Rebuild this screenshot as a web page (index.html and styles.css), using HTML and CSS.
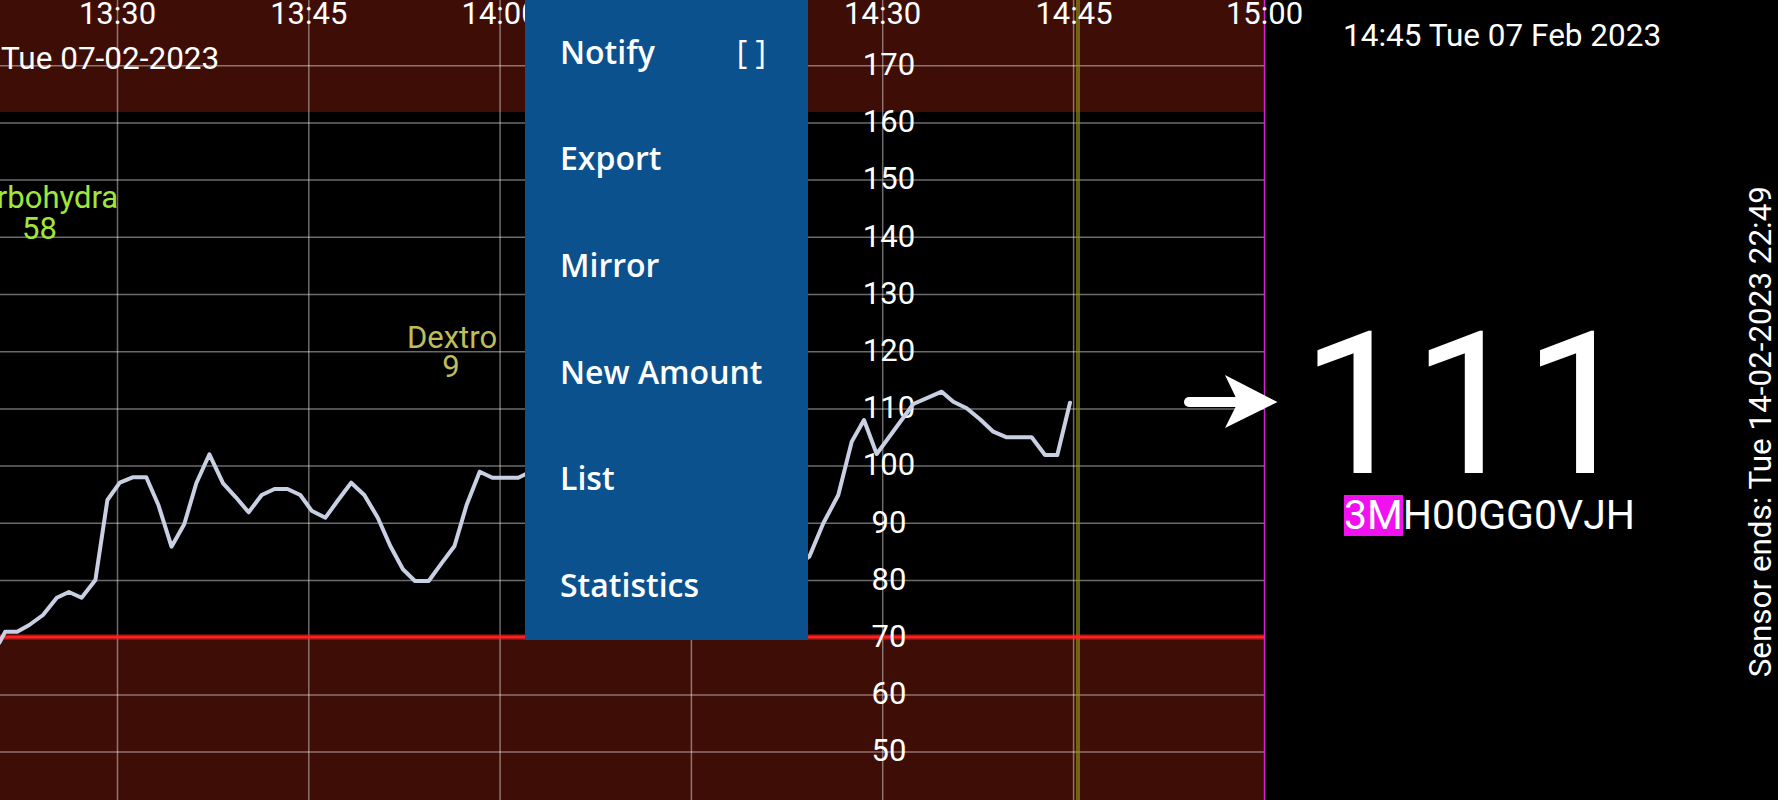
FILE: index.html
```html
<!DOCTYPE html>
<html lang="en">
<head>
<meta charset="utf-8">
<title>Glucose</title>
<link rel="stylesheet" href="styles.css">
</head>
<body>
<div class="screen">
  <svg class="chart" width="1265" height="800" viewBox="0 0 1265 800">
    <rect class="band" x="0" y="0" width="1265" height="112"/>
    <rect class="band" x="0" y="637.7" width="1265" height="163"/>
    <g class="grid">
      <line x1="0" y1="65.7" x2="1264" y2="65.7"/>
      <line x1="0" y1="122.9" x2="1264" y2="122.9"/>
      <line x1="0" y1="180.1" x2="1264" y2="180.1"/>
      <line x1="0" y1="237.3" x2="1264" y2="237.3"/>
      <line x1="0" y1="294.5" x2="1264" y2="294.5"/>
      <line x1="0" y1="351.7" x2="1264" y2="351.7"/>
      <line x1="0" y1="408.9" x2="1264" y2="408.9"/>
      <line x1="0" y1="466.1" x2="1264" y2="466.1"/>
      <line x1="0" y1="523.3" x2="1264" y2="523.3"/>
      <line x1="0" y1="580.5" x2="1264" y2="580.5"/>
      <line x1="0" y1="694.9" x2="1264" y2="694.9"/>
      <line x1="0" y1="752.1" x2="1264" y2="752.1"/>
      <line x1="117.5" y1="0" x2="117.5" y2="800"/>
      <line x1="308.8" y1="0" x2="308.8" y2="800"/>
      <line x1="500.1" y1="0" x2="500.1" y2="800"/>
      <line x1="691.4" y1="0" x2="691.4" y2="800"/>
      <line x1="882.7" y1="0" x2="882.7" y2="800"/>
      <line x1="1073.6" y1="0" x2="1073.6" y2="800"/>
    </g>
    <line class="now" x1="1078" y1="0" x2="1078" y2="800"/>
    <line class="low-glow" x1="0" y1="637" x2="1264" y2="637"/>
    <line class="low" x1="0" y1="637" x2="1264" y2="637"/>
    <line class="edge" x1="1264.5" y1="0" x2="1264.5" y2="800"/>
    <g class="axis">
      <text x="117.5" y="24">13:30</text>
      <text x="308.8" y="24">13:45</text>
      <text x="500.1" y="24">14:00</text>
      <text x="691.4" y="24">14:15</text>
      <text x="882.7" y="24">14:30</text>
      <text x="1074" y="24">14:45</text>
      <text x="1264.5" y="24">15:00</text>
      <text x="889" y="75">170</text>
      <text x="889" y="132">160</text>
      <text x="889" y="189">150</text>
      <text x="889" y="247">140</text>
      <text x="889" y="304">130</text>
      <text x="889" y="361">120</text>
      <text x="889" y="418">110</text>
      <text x="889" y="475">100</text>
      <text x="889" y="533">90</text>
      <text x="889" y="590">80</text>
      <text x="889" y="647">70</text>
      <text x="889" y="704">60</text>
      <text x="889" y="761">50</text>
    </g>
    <text class="day" x="1" y="69">Tue 07-02-2023</text>
    <g class="carb">
      <text x="39" y="208">Carbohydra</text>
      <text x="39.5" y="238.5">58</text>
    </g>
    <g class="dextro">
      <text x="452" y="348">Dextro</text>
      <text x="451" y="377">9</text>
    </g>
    <polyline class="curve" points="-8,652 0,641.7 5.2,631.7 17.2,631.7 29.3,625 43,615 56.8,597.7 68.9,592 81.6,597.7 95.4,580 107.4,500 119.8,482.7 132.6,477.3 146.3,477.3 158.4,505 171.5,546.7 184.2,524.3 196.3,483.3 209.4,454.3 223.1,483.3 235.9,497.3 248.6,512.3 261.7,495 274.5,489 287.5,489 300.3,495 311.6,510.7 325.4,517.7 338.2,500 351.2,482.7 364.3,495 377.8,517.7 390.2,545.7 402.9,569.3 415,581 428.7,581 441.5,563.3 454.5,546 466.6,505 479.7,471.7 492.4,477.7 518.3,477.7 530,472 560,480 600,500 650,560 700,600 760,590 796,566 809.3,556.7 823.3,523.3 838.3,495 851.7,441.7 864,420 876.7,454 913.3,404 941.7,391.7 953.3,401.7 966.7,408.3 980,419.3 993.3,431.7 1006.7,437.3 1031.7,437.3 1045,455 1057.3,455 1070,402.7"/>
    <line class="arrow-shaft" x1="1189" y1="402" x2="1240" y2="402"/>
    <polygon class="arrow-head" points="1225,375 1277.5,402 1225,428 1238,402"/>
  </svg>

  <div class="menu">
    <div class="menu-item"><span>Notify</span><span class="check">[ ]</span></div>
    <div class="menu-item"><span>Export</span></div>
    <div class="menu-item"><span>Mirror</span></div>
    <div class="menu-item"><span>New Amount</span></div>
    <div class="menu-item"><span>List</span></div>
    <div class="menu-item"><span>Statistics</span></div>
  </div>

  <div class="panel">
    <div class="readout">
      <div class="stamp">14:45 Tue 07 Feb 2023</div>
      <div class="value">111</div>
      <div class="serial"><span class="mark">3M</span>H00GG0VJH</div>
    </div>
    <div class="sensor">Sensor ends: Tue 14-02-2023 22:49</div>
  </div>
</div>
</body>
</html>
```
FILE: styles.css
```css
html, body {
  margin: 0;
  padding: 0;
  background: #000;
}
body {
  width: 1778px;
  height: 800px;
  overflow: hidden;
  font-family: Roboto, "Liberation Sans", sans-serif;
  color: #fff;
}
.screen {
  position: relative;
  display: flex;
  width: 1778px;
  height: 800px;
}
.chart {
  flex: none;
  display: block;
  overflow: visible;
}
.band { fill: #3e0e06; }
.grid line {
  stroke: rgba(255, 255, 255, 0.42);
  stroke-width: 1.5;
}
.now {
  stroke: rgba(150, 150, 20, 0.62);
  stroke-width: 4;
}
.low-glow {
  stroke: rgba(255, 40, 40, 0.35);
  stroke-width: 6;
}
.low {
  stroke: #ff2121;
  stroke-width: 3;
}
.edge {
  stroke: #d41fd4;
  stroke-width: 1.5;
}
.axis text, .day, .carb text, .dextro text {
  font-family: Roboto, sans-serif;
  font-size: 31px;
}
.axis text {
  fill: #fff;
  text-anchor: middle;
}
.day {
  fill: #fff;
  font-size: 31.5px;
}
.carb text {
  fill: #a2e63c;
  text-anchor: middle;
}
.dextro text {
  fill: #bdbd5a;
  text-anchor: middle;
}
.curve {
  fill: none;
  stroke: #c9d0e4;
  stroke-width: 4;
  stroke-linejoin: round;
  stroke-linecap: round;
}
.arrow-shaft {
  stroke: #fff;
  stroke-width: 10;
  stroke-linecap: round;
}
.arrow-head { fill: #fff; }

.menu {
  position: absolute;
  left: 525px;
  top: 0;
  width: 283px;
  height: 639.5px;
  background: #0b518e;
  display: flex;
  flex-direction: column;
}
.menu-item {
  flex: 1;
  display: flex;
  align-items: center;
  justify-content: space-between;
  padding: 0 42px 4px 35px;
  font-family: "Open Sans", "Noto Sans", sans-serif;
  font-weight: 600;
  font-size: 32px;
  color: #fff;
}
.check {
  font-weight: 400;
}

.panel {
  flex: 1;
  display: flex;
  min-width: 0;
}
.readout {
  flex: 1;
  display: flex;
  flex-direction: column;
}
.stamp {
  font-size: 31.5px;
  line-height: 36px;
  margin-top: 18px;
  padding-left: 78px;
  white-space: nowrap;
}
.value {
  font-size: 198px;
  line-height: 180px;
  margin-top: 261px;
  padding-left: 36px;
}
.serial {
  font-size: 41px;
  line-height: 41px;
  padding-left: 79px;
  white-space: nowrap;
}
.mark {
  display: inline-block;
  background: #f010f0;
  line-height: 41px;
}
.sensor {
  flex: none;
  align-self: flex-start;
  margin-top: 186px;
  writing-mode: vertical-rl;
  transform: rotate(180deg);
  font-size: 31.4px;
  line-height: 34px;
  white-space: nowrap;
}
```
